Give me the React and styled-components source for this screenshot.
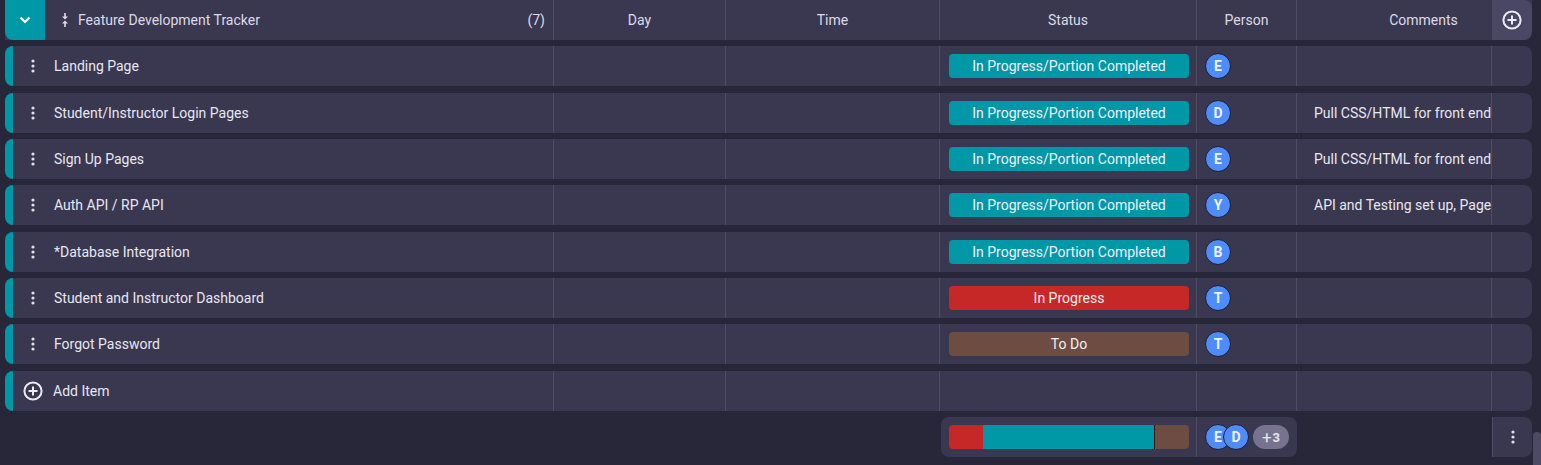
import React from 'react';
import styled, { createGlobalStyle } from 'styled-components';

const GlobalStyle = createGlobalStyle`
  body {
    margin: 0;
    background: #282639;
    font-family: Roboto, "Liberation Sans", sans-serif;
    overflow: hidden;
  }
`;

const Page = styled.div`
  width: 1541px;
  height: 465px;
  position: relative;
  padding: 0 9px 0 5px;
  box-sizing: border-box;
  display: flex;
  flex-direction: column;
  gap: 6.33px;
`;

const HeaderRow = styled.div`
  display: grid;
  grid-template-columns: 40px 509px 172px 214px 257px 100px 195px 40px;
  height: 40px;
  background: #3a3751;
  border-radius: 0 0 8px 0;
  color: #dcdbe6;
  font-size: 14px;
`;

const Toggle = styled.div`
  background: #0097a7;
  border-radius: 0 0 0 8px;
  display: flex;
  align-items: center;
  justify-content: center;
`;

const GroupTitle = styled.div`
  display: flex;
  align-items: center;
  padding: 0 8px 0 17px;
  gap: 10px;
  border-right: 1px solid #4f4c66;
  & > span:last-child {
    margin-left: auto;
  }
`;

const HeadCell = styled.div`
  display: flex;
  align-items: center;
  justify-content: center;
  border-right: ${p => (p.$last ? 'none' : '1px solid #4f4c66')};
  padding-left: ${p => p.$shift || 0}px;
`;

const AddCol = styled.div`
  background: #4a4764;
  border-radius: 0 8px 8px 0;
  display: flex;
  align-items: center;
  justify-content: center;
`;

const Row = styled.div`
  display: grid;
  grid-template-columns: 8px 541px 172px 214px 257px 100px 195px 40px;
  height: 40px;
  background: #3a3751;
  border-radius: 8px;
  overflow: hidden;
  color: #e8e7f0;
  font-size: 14px;
`;

const Strip = styled.div`
  background: #0097a7;
`;

const NameCell = styled.div`
  display: flex;
  align-items: center;
  padding-left: 18px;
  gap: 19px;
  border-right: 1px solid #4f4c66;
`;

const Cell = styled.div`
  display: flex;
  align-items: center;
  padding-left: ${p => p.$pad || 0}px;
  border-right: ${p => (p.$last ? 'none' : '1px solid #4f4c66')};
  white-space: nowrap;
  overflow: hidden;
`;

const StatusPill = styled.div`
  width: 240px;
  height: 24px;
  margin-left: 9px;
  border-radius: 4px;
  background: ${p => p.$color};
  color: #f1f1f6;
  font-size: 14px;
  display: flex;
  align-items: center;
  justify-content: center;
  flex-shrink: 0;
`;

const Avatar = styled.div`
  box-sizing: border-box;
  width: 26px;
  height: 26px;
  border-radius: 50%;
  background: #4e8cfa;
  border: 1px solid #1e1d2a;
  color: #eef2ff;
  font-size: 14px;
  font-weight: 700;
  display: flex;
  align-items: center;
  justify-content: center;
  margin-left: ${p => (p.$overlap ? '-8px' : '0')};
  flex-shrink: 0;
`;

const AddItemCell = styled.div`
  display: flex;
  align-items: center;
  gap: 10px;
  padding-left: 10px;
  border-right: 1px solid #4f4c66;
`;

const Footer = styled.div`
  display: grid;
  grid-template-columns: 936px 356px 195px 40px;
  height: 40px;
  margin-top: 0.5px;
`;

const Summary = styled.div`
  grid-column: 2;
  background: #3a3751;
  border-radius: 8px;
  display: grid;
  grid-template-columns: 256px 100px;
`;

const BarCell = styled.div`
  display: flex;
  align-items: center;
  padding-left: 8px;
  border-right: 1px solid #4f4c66;
`;

const StackBar = styled.div`
  width: 240px;
  height: 24px;
  border-radius: 4px;
  overflow: hidden;
  display: flex;
`;

const Segment = styled.div`
  height: 100%;
  background: ${p => p.$color};
  border-left: ${p => (p.$sep ? '1px solid #111' : 'none')};
`;

const PeopleCell = styled.div`
  display: flex;
  align-items: center;
  padding-left: 8px;
`;

const MorePill = styled.div`
  margin-left: 4px;
  width: 36px;
  height: 24px;
  border-radius: 12px;
  background: #77738f;
  color: #e6e5f0;
  font-size: 13px;
  font-weight: 700;
  display: flex;
  align-items: center;
  justify-content: center;
  gap: 1px;
`;

const MenuBox = styled.div`
  grid-column: 4;
  background: #3a3751;
  border-left: 1px solid #4f4c66;
  border-radius: 0 8px 8px 0;
  display: flex;
  align-items: center;
  justify-content: center;
`;

const Scrollbar = styled.div`
  position: absolute;
  right: 0;
  top: 432px;
  width: 8px;
  height: 40px;
  border-radius: 4px 4px 0 0;
  background: #4d4a66;
`;

const Dots = ({ color = '#e0dfe8' }) => (
  <svg width="4" height="14" viewBox="0 0 4 14">
    <circle cx="2" cy="2" r="1.6" fill={color} />
    <circle cx="2" cy="7" r="1.6" fill={color} />
    <circle cx="2" cy="12" r="1.6" fill={color} />
  </svg>
);

const PlusCircle = ({ size = 20 }) => (
  <svg width={size} height={size} viewBox="0 0 20 20">
    <circle cx="10" cy="10" r="8.6" fill="none" stroke="#ececf2" strokeWidth="2" />
    <path d="M10 5.5v9M5.5 10h9" stroke="#ececf2" strokeWidth="2" />
  </svg>
);

const Chevron = () => (
  <svg width="12" height="8" viewBox="0 0 12 8">
    <path d="M1.5 1.5L6 6l4.5-4.5" fill="none" stroke="#ffffff" strokeWidth="2.2" />
  </svg>
);

const CollapseIcon = () => (
  <svg width="6" height="14" viewBox="0 0 6 14">
    <rect x="2.2" y="0" width="1.6" height="4" fill="#dcdbe6" />
    <path d="M0 3.5h6L3 6.5z M0 10.5h6L3 7.5z" fill="#dcdbe6" />
    <rect x="2.2" y="10" width="1.6" height="4" fill="#dcdbe6" />
  </svg>
);

const STATUS = {
  partial: { label: 'In Progress/Portion Completed', color: '#0097a7' },
  progress: { label: 'In Progress', color: '#c62828' },
  todo: { label: 'To Do', color: '#6d4c41' },
};

const items = [
  { name: 'Landing Page', status: 'partial', person: 'E', comment: '' },
  { name: 'Student/Instructor Login Pages', status: 'partial', person: 'D', comment: 'Pull CSS/HTML for front end' },
  { name: 'Sign Up Pages', status: 'partial', person: 'E', comment: 'Pull CSS/HTML for front end' },
  { name: 'Auth API / RP API', status: 'partial', person: 'Y', comment: 'API and Testing set up, Page' },
  { name: '*Database Integration', status: 'partial', person: 'B', comment: '' },
  { name: 'Student and Instructor Dashboard', status: 'progress', person: 'T', comment: '' },
  { name: 'Forgot Password', status: 'todo', person: 'T', comment: '' },
];

export default function App() {
  return (
    <Page>
      <GlobalStyle />
      <HeaderRow>
        <Toggle><Chevron /></Toggle>
        <GroupTitle>
          <CollapseIcon />
          <span>Feature Development Tracker</span>
          <span>(7)</span>
        </GroupTitle>
        <HeadCell>Day</HeadCell>
        <HeadCell>Time</HeadCell>
        <HeadCell>Status</HeadCell>
        <HeadCell>Person</HeadCell>
        <HeadCell $last $shift={58}>Comments</HeadCell>
        <AddCol><PlusCircle /></AddCol>
      </HeaderRow>

      {items.map((it, i) => (
        <Row key={i}>
          <Strip />
          <NameCell>
            <Dots />
            <span>{it.name}</span>
          </NameCell>
          <Cell />
          <Cell />
          <Cell>
            <StatusPill $color={STATUS[it.status].color}>{STATUS[it.status].label}</StatusPill>
          </Cell>
          <Cell $pad={8}><Avatar>{it.person}</Avatar></Cell>
          <Cell $pad={17}>{it.comment}</Cell>
          <Cell $last />
        </Row>
      ))}

      <Row>
        <Strip />
        <AddItemCell>
          <PlusCircle />
          <span>Add Item</span>
        </AddItemCell>
        <Cell />
        <Cell />
        <Cell />
        <Cell />
        <Cell />
        <Cell $last />
      </Row>

      <Footer>
        <Summary>
          <BarCell>
            <StackBar>
              <Segment $color="#c62828" style={{ width: `${(1 / 7) * 100}%` }} />
              <Segment $color="#0097a7" style={{ width: `${(5 / 7) * 100}%` }} />
              <Segment $color="#6d4c41" $sep style={{ width: `${(1 / 7) * 100}%` }} />
            </StackBar>
          </BarCell>
          <PeopleCell>
            <Avatar>E</Avatar>
            <Avatar $overlap>D</Avatar>
            <MorePill><span style={{ fontSize: 17, fontWeight: 400 }}>+</span>3</MorePill>
          </PeopleCell>
        </Summary>
        <MenuBox><Dots /></MenuBox>
      </Footer>
      <Scrollbar />
    </Page>
  );
}
